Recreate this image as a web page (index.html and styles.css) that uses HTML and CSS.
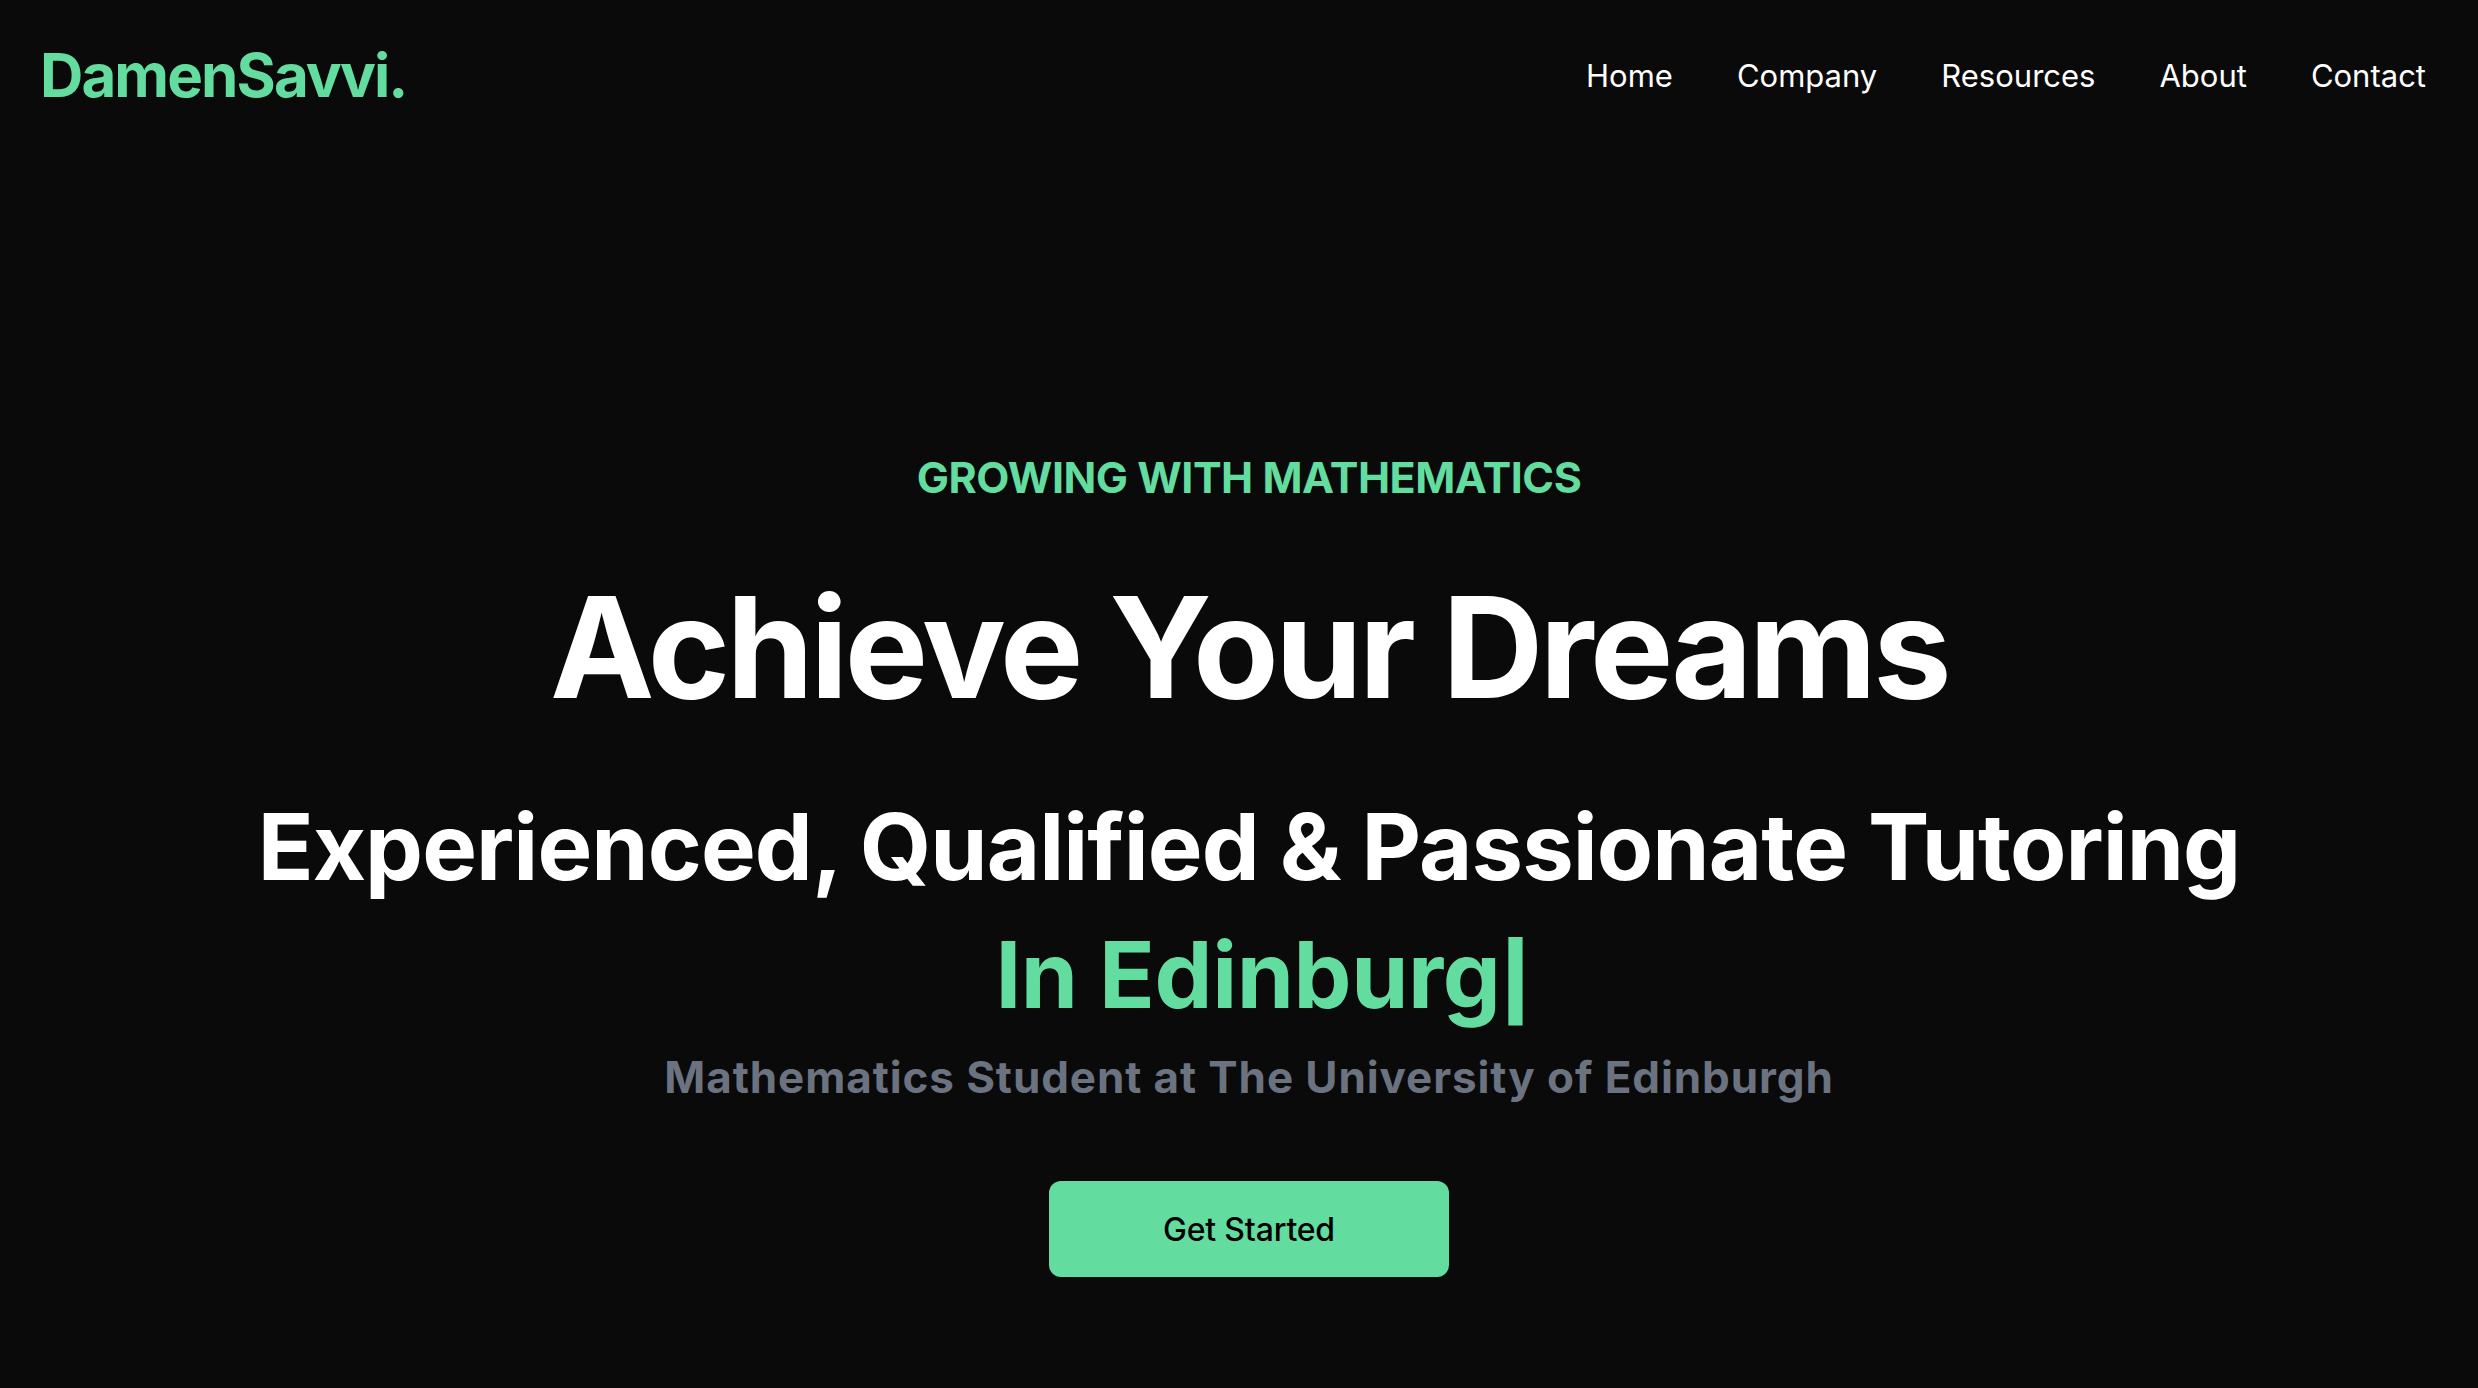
FILE: index.html
```html
<!DOCTYPE html>
<html lang="en">
<head>
<meta charset="utf-8">
<title>DamenSavvi.</title>
<link rel="stylesheet" href="styles.css">
</head>
<body>
<header class="nav">
  <h1 class="logo">DamenSavvi.</h1>
  <ul class="menu">
    <li>Home</li>
    <li>Company</li>
    <li>Resources</li>
    <li>About</li>
    <li>Contact</li>
  </ul>
</header>
<main class="hero">
  <p class="eyebrow">GROWING WITH MATHEMATICS</p>
  <h2 class="title">Achieve Your Dreams</h2>
  <p class="lead">Experienced, Qualified &amp; Passionate Tutoring</p>
  <p class="typed"><span class="typed-text">In Edinburg</span><span class="cursor">|</span></p>
  <p class="sub">Mathematics Student at The University of Edinburgh</p>
  <button class="cta">Get Started</button>
</main>
</body>
</html>
```
FILE: styles.css
```css
* { box-sizing: border-box; }
html, body { margin: 0; padding: 0; }
body {
  background: #0a0a0a;
  color: #ffffff;
  font-family: Inter, "Noto Sans", "Liberation Sans", sans-serif;
  min-height: 1388px;
}
.nav {
  display: flex;
  justify-content: space-between;
  align-items: center;
  height: 150px;
  padding: 0 20px 0 40px;
}
.logo {
  margin: 0;
  font-size: 60px;
  font-weight: 700;
  color: #62dc9f;
  line-height: 1;
  letter-spacing: -1.9px;
}
.menu {
  display: flex;
  list-style: none;
  margin: 0;
  padding: 0;
}
.menu li {
  padding: 0 32px;
  font-size: 31px;
  line-height: 1;
}
.hero {
  display: flex;
  flex-direction: column;
  align-items: center;
  text-align: center;
  padding: 306px 0 0 20px;
}
.eyebrow {
  margin: 0;
  font-size: 43px;
  font-weight: 700;
  color: #62dc9f;
  line-height: 1;
  letter-spacing: -0.5px;
}
.title {
  margin: 78px 0 0;
  font-size: 140px;
  font-weight: 700;
  line-height: 1;
  letter-spacing: -3.5px;
}
.lead {
  margin: 84px 0 0;
  font-size: 92px;
  font-weight: 700;
  line-height: 1;
  letter-spacing: -0.9px;
}
.typed {
  margin: 36px 0 0;
  padding-left: 28px;
  font-size: 92px;
  font-weight: 700;
  color: #62dc9f;
  line-height: 1;
  letter-spacing: -0.4px;
}
.cursor {
  display: inline-block;
  font-size: 74px;
  font-weight: 900;
  letter-spacing: 0;
}
.sub {
  margin: 34px 0 0;
  font-size: 44px;
  font-weight: 700;
  color: #6b7280;
  line-height: 1;
  letter-spacing: 0.9px;
}
.cta {
  margin-top: 82px;
  width: 400px;
  height: 96px;
  border: 0;
  border-radius: 12px;
  background: #62dc9f;
  color: #000;
  font-family: inherit;
  font-size: 32px;
  font-weight: 500;
  letter-spacing: -0.2px;
}
```
